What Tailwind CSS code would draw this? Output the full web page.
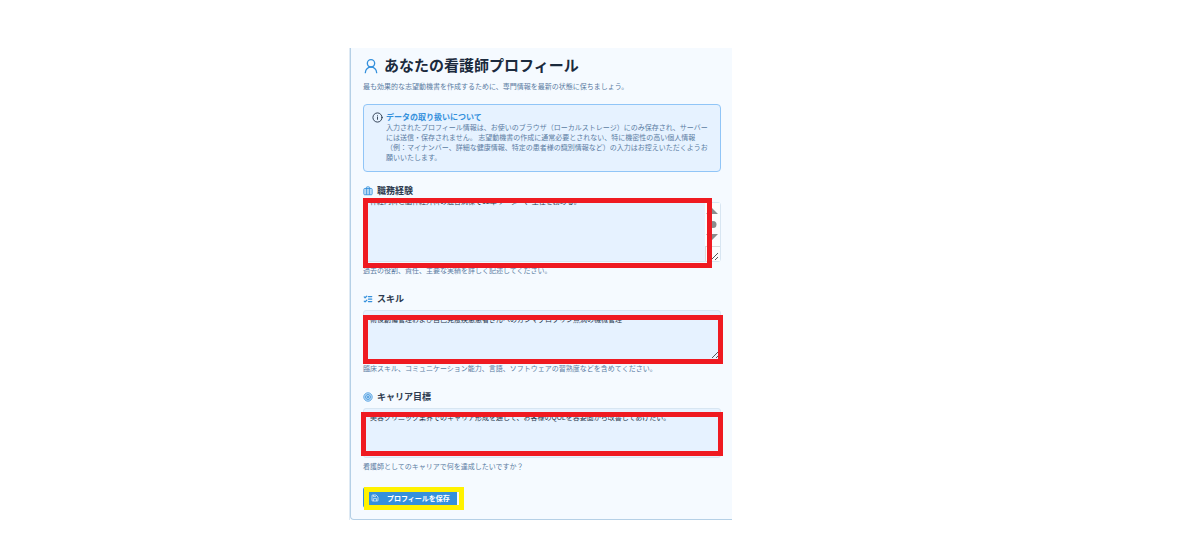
<!DOCTYPE html>
<html lang="ja">
<head>
  <meta charset="UTF-8" />
  <meta name="viewport" content="width=device-width, initial-scale=1.0"/>
  <title>あなたの看護師プロフィール</title>
  <script src="https://cdn.jsdelivr.net/npm/@tailwindcss/browser@4"></script>
</head>
<body class="bg-white font-['Noto_Sans_CJK_JP',sans-serif] text-[7px] leading-[10px] text-[#5c7da3]">

  <main class="ml-[349px] mt-12 w-[383px] max-w-full border-l border-[#dfeaf4]">
    <div class="rounded-bl-[4px] border-b border-l border-[#b5d0e6] bg-[#f5faff] pt-[7px] pr-[11px] pb-[11px] pl-3">

      <header>
        <h1 class="flex items-center gap-[5px] text-[15px] leading-5 font-bold text-[#1b2a3d]">
          <svg class="mt-px size-4 text-[#3490dc]" viewBox="0 0 24 24" fill="none" stroke="currentColor" stroke-width="2" stroke-linecap="round" stroke-linejoin="round"><circle cx="12" cy="8" r="5.5"/><path d="M20.5 22a8.5 8.5 0 0 0-17 0"/></svg>
          あなたの看護師プロフィール
        </h1>
        <p class="mt-[6px]">最も効果的な志望動機書を作成するために、専門情報を最新の状態に保ちましょう。</p>
      </header>

      <section class="mt-[13px] flex gap-[3px] rounded-[4px] border border-[#90c5f7] bg-[#e6f2ff] px-2 pt-[7px] pb-[9px]">
        <svg class="size-[11px] shrink-0 text-[#26364a]" viewBox="0 0 24 24" fill="none" stroke="currentColor" stroke-width="2" stroke-linecap="round"><circle cx="12" cy="12" r="10"/><path d="M12 16v-5M12 8h.01"/></svg>
        <div>
          <h2 class="text-[8px] leading-[10px] font-bold text-[#3490dc]">データの取り扱いについて</h2>
          <p>入力されたプロフィール情報は、お使いのブラウザ（ローカルストレージ）にのみ保存され、サーバーには送信・保存されません。 志望動機書の作成に通常必要とされない、特に機密性の高い個人情報（例：マイナンバー、詳細な健康情報、特定の患者様の識別情報など）の入力はお控えいただくようお願いいたします。</p>
        </div>
      </section>

      <form>
        <div class="mt-[14px]">
          <label for="experience" class="flex items-center gap-1 text-[9px] leading-[10px] font-bold text-[#2d3b4f]">
            <svg class="size-[10px] text-[#3490dc]" viewBox="0 0 24 24" fill="#3490dc33" stroke="currentColor" stroke-width="2" stroke-linejoin="round"><rect x="2" y="6" width="20" height="15" rx="2"/><path d="M8 21V4a2 2 0 0 1 2-2h4a2 2 0 0 1 2 2v17"/></svg>
            職務経験
          </label>
          <div class="relative mt-[6px]">
            <textarea id="experience" class="block h-[60px] w-full resize-none rounded-[3px] border border-[#d8e6f2] bg-[#e6f2ff] px-[6px] py-[3px] text-[#26364a] [scrollbar-width:none]">
神経内科と脳神経外科の混合病棟で12年リーダー、主任を務める。





</textarea>
            <!-- scrollbar and resize grip -->
            <svg class="absolute top-px right-px h-[58px] w-[15px]" viewBox="0 0 15 58"><path d="M0 0h15v58H0z" fill="#fcfcfc"/><path d="M1 11 7 5l6 6zM1 31l6 6 6-6z" fill="#8b8b8b"/><circle cx="8" cy="21.5" r="3.5" fill="#8b8b8b"/><path d="M0 43.5h15M.5 43v15" stroke="#d9d9d9"/><path d="m6 57 7-7m-3 7 3-3" stroke="#555" fill="none"/></svg>
            <div class="pointer-events-none absolute -top-1 right-[9px] -bottom-[6px] left-0 border-5 border-[#ef1a21]"></div>
          </div>
          <p class="mt-[3px]">過去の役割、責任、主要な実績を詳しく記述してください。</p>
        </div>

        <div class="mt-[19px]">
          <label for="skills" class="flex items-center gap-1 text-[9px] leading-[10px] font-bold text-[#2d3b4f]">
            <svg class="size-[10px] text-[#3490dc]" viewBox="0 0 24 24" fill="none" stroke="currentColor" stroke-width="3" stroke-linecap="round" stroke-linejoin="round"><path d="m3 17 2 2 4-4M3 7l2 2 4-4M13 6h8M13 12h8M13 18h8"/></svg>
            スキル
          </label>
          <div class="relative mt-[6px]">
            <textarea id="skills" class="block h-[50px] w-full resize-none rounded-[3px] border border-[#d8e6f2] bg-[#e6f2ff] px-[6px] py-[3px] text-[#26364a] [scrollbar-width:none]">術後創傷管理および自己免疫疾患患者さんへのガンマグロブリン点滴の機械管理</textarea>
            <svg class="absolute right-[2px] bottom-[2px] size-[7px]" viewBox="0 0 7 7"><path d="m0 7 7-7M4 7l3-3" stroke="#555" fill="none"/></svg>
            <div class="pointer-events-none absolute top-[5px] -right-[2px] -bottom-1 left-0 border-5 border-[#ef1a21]"></div>
          </div>
          <p class="mt-[3px]">臨床スキル、コミュニケーション能力、言語、ソフトウェアの習熟度などを含めてください。</p>
        </div>

        <div class="mt-[19px]">
          <label for="goals" class="flex items-center gap-1 text-[9px] leading-[10px] font-bold text-[#2d3b4f]">
            <svg class="size-[10px] text-[#3490dc]" viewBox="0 0 24 24" fill="#3490dc22" stroke="currentColor" stroke-width="2"><circle cx="12" cy="12" r="10"/><circle cx="12" cy="12" r="6"/><circle cx="12" cy="12" r="2"/></svg>
            キャリア目標
          </label>
          <div class="relative mt-[6px]">
            <textarea id="goals" class="block h-[50px] w-full resize-none rounded-[3px] border border-[#d8e6f2] bg-[#e6f2ff] px-[6px] py-[3px] text-[#26364a] [scrollbar-width:none]">美容クリニック業界でのキャリア形成を通して、お客様のQOLを容姿面から改善してあげたい。</textarea>
            <div class="pointer-events-none absolute top-1 -right-[2px] bottom-[2px] -left-[2px] border-5 border-[#ef1a21]"></div>
          </div>
          <p class="mt-[3px]">看護師としてのキャリアで何を達成したいですか？</p>
        </div>

        <div class="relative mt-4 w-[101px]">
          <button type="submit" class="flex h-[21px] w-[94px] items-center gap-2 rounded-[3px] bg-[#3490dc] pl-2 font-bold whitespace-nowrap text-white">
            <svg class="size-2" viewBox="0 0 24 24" fill="none" stroke="currentColor" stroke-width="2" stroke-linejoin="round"><path d="M15 3H5a2 2 0 0 0-2 2v14a2 2 0 0 0 2 2h14a2 2 0 0 0 2-2V9zM17 21v-7H7v7M7 3v5h8"/></svg>
            プロフィールを保存
          </button>
          <div class="pointer-events-none absolute top-0 right-0 -bottom-[2px] left-px border-5 border-[#fff200]"></div>
        </div>
      </form>
    </div>
  </main>

  <script>
    document.getElementById('experience').scrollTop = 10;
  </script>

</body>
</html>
